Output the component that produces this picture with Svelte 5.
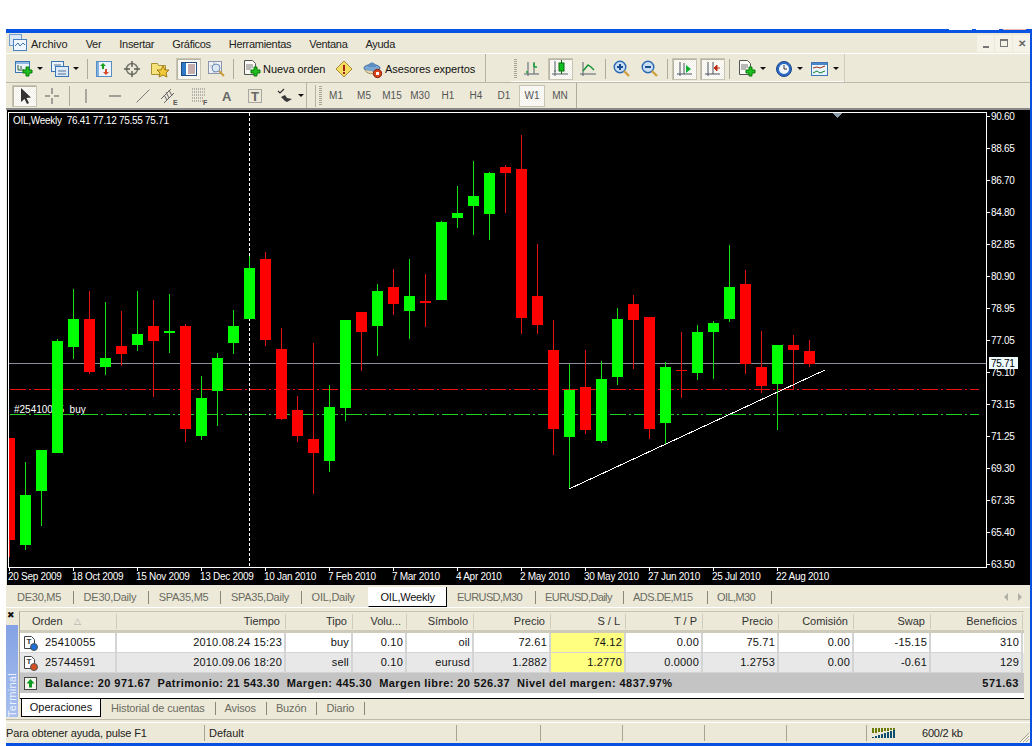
<script>
  const raw = [
    [9,'r',438,438,540,557],[25,'g',462,495,545,550],[41,'g',450,450,491,526],[57,'g',339,341,453,453],
    [73,'g',289,319,347,359],[89,'r',291,319,372,374],[105,'g',302,358,367,375],[121,'r',311,346,354,366],
    [137,'g',291,334,345,351],[153,'r',300,326,341,397],[169,'g',294,331,333,353],[185,'r',324,326,429,442],
    [201,'g',376,398,436,440],[217,'g',353,358,391,426],[233,'g',310,326,343,354],[249,'g',256,268,319,319],
    [265,'r',252,259,340,346],[281,'r',328,349,419,420],[297,'r',396,410,436,442],[313,'r',343,439,453,494],
    [329,'g',385,407,461,472],[345,'g',320,320,408,421],[361,'r',312,312,332,371],[377,'g',284,291,326,356],
    [393,'r',269,287,304,315],[409,'g',259,296,311,339],[425,'r',274,301,303,327],[441,'g',221,222,300,300],
    [457,'g',186,213,218,228],[473,'g',161,196,206,235],[489,'g',172,173,214,240],[505,'r',165,167,173,213],
    [521,'r',135,169,318,334],[537,'r',244,296,325,334],[553,'r',320,350,429,455],[569,'g',364,390,437,489],
    [585,'r',350,387,430,434],[601,'g',361,379,441,443],[617,'g',308,319,377,385],[633,'r',295,304,320,369],
    [649,'r',317,317,429,439],[665,'g',362,367,423,444],[681,'r',332,370,371,398],[697,'g',325,332,373,380],
    [713,'g',321,323,332,379],[729,'g',245,287,319,322],[745,'r',270,284,364,374],[761,'r',331,367,386,393],
    [777,'g',345,345,384,430],[793,'r',335,345,350,390],[809,'r',340,351,364,367]
  ];
  const candles = raw.map(([x,c,h,t,b,l]) => ({x,c,h,t,b,l}));
  const prices = ['90.60','88.65','86.70','84.80','82.85','80.90','78.95','77.05','75.10','73.15','71.25','69.30','67.35','65.40','63.50'];
  const dates = ['20 Sep 2009','18 Oct 2009','15 Nov 2009','13 Dec 2009','10 Jan 2010','7 Feb 2010','7 Mar 2010','4 Apr 2010','2 May 2010','30 May 2010','27 Jun 2010','25 Jul 2010','22 Aug 2010'];

  const tb1a = [
    {w:6},{w:33,i:'newchart',a:1},{w:3},{w:33,i:'profile',a:1},{w:3},{w:6,s:1},
    {w:28,i:'market'},{w:28,i:'cross'},{w:28,i:'folder'},{w:2},{w:25,i:'nav',p:1},{w:3},{w:26,i:'data'},{w:6,s:1}
  ];
  const tb1c = [
    {w:30,i:'bars'},{w:1},{w:25,i:'candles',p:1},{w:3},{w:26,i:'line'},{w:6,s:1},
    {w:28,i:'zin'},{w:28,i:'zout'},{w:6,s:1},{w:2},{w:25,i:'auto',p:1},{w:3},{w:25,i:'shift',p:1},{w:1},{w:6,s:1},
    {w:5},{w:29,i:'indic',a:1},{w:8},{w:29,i:'clock',a:1},{w:7},{w:29,i:'tmpl',a:1}
  ];
  const tb2a = [
    {w:6},{w:25,i:'pointer',p:1},{w:3},{w:23,i:'plus'},{w:12,s:1},{w:22,i:'vline'},{w:36,i:'hline'},{w:20,i:'diag'},
    {w:34,i:'chan'},{w:24,i:'fibo'},{w:31,i:'atext'},{w:26,i:'ttext'},{w:7},{w:29,i:'shapes',a:1}
  ];
  const tfs = ['M1','M5','M15','M30','H1','H4','D1'];

  const tabs = ['DE30,M5','DE30,Daily','SPA35,M5','SPA35,Daily','OIL,Daily'];
  const tabs2 = [['EURUSD,M30',88],['EURUSD,Daily',88],['ADS.DE,M15',84],['OIL,M30',64]];
  const heads = ['Tiempo','Tipo','Volu...','Símbolo','Precio','S / L','T / P','Precio','Comisión','Swap','Beneficios'];
  const rows = [
    {id:'25410055',c:'#1f6fd8',v:['2010.08.24 15:23','buy','0.10','oil','72.61','74.12','0.00','75.71','0.00','-15.15','310']},
    {id:'25744591',c:'#d84f1f',v:['2010.09.06 18:20','sell','0.10','eurusd','1.2882','1.2770','0.0000','1.2753','0.00','-0.61','129']}
  ];
  const bottom = ['Historial de cuentas','Avisos','Buzón','Diario'];
  const bars = [0,1,2,3,4,5,6,7];
</script>

{#snippet icon(n)}
  <svg class="ic" width="20" height="20" viewBox="0 0 20 20">
    {#if n==='newchart'}
      <rect x="1.5" y="2.5" width="14" height="11" fill="#eaf2fb" stroke="#3c74b4"/><rect x="2" y="3" width="13" height="2" fill="#8fb8e4"/><path d="M4 6v5h6M7 7v3" stroke="#2a5a2a" fill="none"/>
      <path d="M12 8h3v3h3v3h-3v3h-3v-3h-3v-3h3z" fill="#1fc01f" stroke="#0a7a0a"/>
    {:else if n==='profile'}
      <rect x="1.5" y="2.5" width="12" height="10" fill="#eaf2fb" stroke="#3c74b4"/><rect x="5.5" y="7.5" width="13" height="10" fill="#dce9f8" stroke="#3c74b4"/><path d="M8 12h8M8 15h8M4 6h7" stroke="#55708f"/>
    {:else if n==='market'}
      <rect x="2.5" y="2.5" width="15" height="15" fill="#eef4fb" stroke="#5a8cc4"/><rect x="3" y="3" width="2" height="14" fill="#7fb0e4"/><path d="M9 4l3 3h-2v3h-2v-3h-2z" fill="#1aa01a"/><path d="M12 16l-3-3h2v-3h2v3h2z" fill="#d84a2a"/>
    {:else if n==='cross'}
      <circle cx="10" cy="10" r="5.5" fill="none" stroke="#7a7a70" stroke-width="1.5"/><path d="M10 2v6M10 12v6M2 10h6M12 10h6" stroke="#5a5a55" stroke-width="1.4"/>
    {:else if n==='folder'}
      <path d="M1.5 4.5h6l1 2h7v9h-14z" fill="#f6e27a" stroke="#a89030"/><path d="M13 7l2 4h4l-3 3 1 4-4-2-4 2 1-4-3-3h4z" fill="#f2c83c" stroke="#a07c10"/>
    {:else if n==='nav'}
      <rect x="2.5" y="3.5" width="15" height="13" fill="#fff" stroke="#244a80"/><rect x="3" y="4" width="4" height="12" fill="#2e78c8"/><path d="M9 6h7M9 8h7M9 10h7M9 12h7M9 14h7" stroke="#8a5a5a"/>
    {:else if n==='data'}
      <rect x="1.5" y="2.5" width="13" height="12" fill="#eef0f6" stroke="#8a96b0"/><path d="M7 3v11M3 7h10" stroke="#aeb6c8"/><circle cx="9" cy="9" r="4" fill="#dce8f6" stroke="#6a88b0"/><path d="M12 12l5 5" stroke="#c89a3a" stroke-width="2"/>
    {:else if n==='order'||n==='indic'}
      <path d="M2.5 1.5h8l3 3v11h-11z" fill="#fbfbf6" stroke="#555"/><path d="M4 6h7M4 8h7M4 10h5" stroke="#777"/>
      <path d="M12 8h3v3h3v3h-3v3h-3v-3h-3v-3h3z" fill="#1fc01f" stroke="#0a7a0a"/>
    {:else if n==='diamond'}
      <path d="M10 2l8 8-8 8-8-8z" fill="#f8dc60" stroke="#a88a40"/><path d="M10 6v6" stroke="#a02010" stroke-width="2"/><rect x="9" y="13" width="2" height="2" fill="#a02010"/>
    {:else if n==='hat'}
      <ellipse cx="9" cy="9" rx="8" ry="3.5" fill="#7aa6d4" stroke="#3c6a9c"/><path d="M5 8c0-6 8-6 8 0z" fill="#5c8cc0"/><path d="M2 11c1 4 10 5 12 2" fill="#e8d8a8" stroke="#a89060"/><circle cx="14.5" cy="14.5" r="4.2" fill="#d8401c" stroke="#8a2810"/><rect x="13" y="13" width="3" height="3" fill="#fff"/>
    {:else if n==='bars'}
      <path d="M6 3v14M2 15h15M12 3v12" stroke="#55606a" fill="none"/><path d="M4 13h2M12 8h3M12 4v4" stroke="#10a030" fill="none" stroke-width="1.5"/>
    {:else if n==='candles'}
      <path d="M4 2v15M1 15h16M3 12h2" stroke="#55606a"/><rect x="8" y="4" width="5" height="8" fill="#10c020" stroke="#0a6a10"/><path d="M10.5 1v3M10.5 12v3" stroke="#0a6a10"/>
    {:else if n==='line'}
      <path d="M4 3v14M1 15h16" stroke="#55606a"/><path d="M4 12l5-6 3 2 3 3" fill="none" stroke="#109030" stroke-width="1.4"/>
    {:else if n==='zin'||n==='zout'}
      <circle cx="8" cy="8" r="5.8" fill="#c8def4" stroke="#2a68b4" stroke-width="1.4"/><path d="M5 8h6" stroke="#1c4c90" stroke-width="2"/>
      {#if n==='zin'}<path d="M8 5v6" stroke="#1c4c90" stroke-width="2"/>{/if}
      <path d="M12 12l5 5" stroke="#d0a040" stroke-width="2.4"/>
    {:else if n==='auto'}
      <path d="M5 3v14M2 15h15M9 4v11" stroke="#4a5560"/><path d="M11 6l5 4-5 4z" fill="#10b030"/>
    {:else if n==='shift'}
      <path d="M5 3v14M2 15h15M10 3v12" stroke="#4a5560"/><path d="M17 9h-4M11 9l3-3v6z" fill="#c02a10" stroke="#c02a10"/>
    {:else if n==='clock'}
      <circle cx="10" cy="10" r="7.5" fill="#2c6cc4" stroke="#1c4488"/><circle cx="10" cy="10" r="5" fill="#f4f6fa"/><path d="M10 6v4h3" stroke="#333" fill="none"/>
    {:else if n==='tmpl'}
      <rect x="1.5" y="3.5" width="16" height="13" fill="#e8f4ff" stroke="#3c74b4"/><rect x="2" y="4" width="15" height="2" fill="#4a86cc"/><path d="M3 9l4-1 3 1 5-2" fill="none" stroke="#a03010"/><path d="M3 14l4-2 3 2 5-2" fill="none" stroke="#108030"/>
    {:else if n==='pointer'}
      <path d="M6 2l0 14 3.5-3 2.5 5 2-1-2.5-5 4.5-.5z" fill="#333"/>
    {:else if n==='plus'}
      <path d="M10 2v6M10 12v6M3 10h5M12 10h5" stroke="#555"/>
    {:else if n==='vline'}
      <path d="M10 3v14" stroke="#666"/>
    {:else if n==='hline'}
      <path d="M4 10h12" stroke="#555"/>
    {:else if n==='diag'}
      <path d="M3.5 16.5l13-13" stroke="#777"/>
    {:else if n==='chan'}
      <path d="M1 13l10-10M4 17l10-10M6 6l3 6M9 4l3 6M4 9l3 5" stroke="#666" fill="none"/><text x="13" y="19" class="mini">E</text>
    {:else if n==='fibo'}
      <path d="M3 3h14M3 6h14M3 9h14M3 12h11M3 15h11" stroke="#777" stroke-dasharray="1 1"/><text x="14" y="19" class="mini">F</text>
    {:else if n==='atext'}
      <text x="5" y="15" class="aa">A</text>
    {:else if n==='ttext'}
      <rect x="3.5" y="3.5" width="13" height="13" fill="none" stroke="#666" stroke-dasharray="1 1"/><text x="6" y="15" class="aa">T</text>
    {:else if n==='shapes'}
      <path d="M3 5l2 2 4-4" fill="none" stroke="#333" stroke-width="1.2"/><path d="M6 11l4-2 2 3 5 1-5 3-2-1z" fill="#3a3a3a"/>
    {/if}
  </svg>
{/snippet}

{#snippet items(list)}
  {#each list as it}
    {#if it.s}
      <div class="slot" style:width="{it.w}px"><span class="sep"></span></div>
    {:else if it.i}
      <div class="slot" class:pressed={it.p} style:width="{it.w}px">
        {@render icon(it.i)}
        {#if it.a}<span class="arrow"></span>{/if}
      </div>
    {:else}
      <div class="pad" style:width="{it.w}px"></div>
    {/if}
  {/each}
{/snippet}

<div class="page">
  <div class="win">
    <div class="title">
      <i class="cap"></i><i class="cap"></i><i class="cap red"></i>
    </div>

    <div class="menu">
      <svg class="appicon" width="18" height="18" viewBox="0 0 18 18"><rect x="0.5" y="0.5" width="12" height="11" fill="#dbe8f8" stroke="#6f9bd2"/><rect x="4.5" y="5.5" width="13" height="11" fill="#f0f6fd" stroke="#4a80c0"/><path d="M6 12l3-3 2 3 3-3 2 2" fill="none" stroke="#3a70b0"/></svg>
      <span class="m first">Archivo</span><span class="m">Ver</span><span class="m">Insertar</span><span class="m">Gráficos</span><span class="m">Herramientas</span><span class="m">Ventana</span><span class="m">Ayuda</span>
      <div class="mdi">
        <span class="mb"><b class="min"></b></span><span class="mb"><b class="res"></b></span><span class="mb"><b class="x">✕</b></span>
      </div>
    </div>

    <div class="tb one">
      <div class="group first-group">
        {@render items(tb1a)}
        <div class="slot lab order">{@render icon('order')}<span>Nueva orden</span></div>
        <div class="slot" style:width="26px">{@render icon('diamond')}</div>
        <div class="slot lab hat">{@render icon('hat')}<span>Asesores expertos</span></div>
      </div>
      <div class="gapfill"></div>
      <div class="group last-group">
        <span class="grip"></span>
        {@render items(tb1c)}
      </div>
    </div>

    <div class="tb two">
      <div class="group tools">
        {@render items(tb2a)}
      </div>
      <div class="group frames">
        <span class="vbar"></span>
        <span class="grip"></span>
        {#each tfs as t}<div class="tf">{t}</div>{/each}
        <div class="tf w1">W1</div>
        <div class="tf mn">MN</div>
      </div>
    </div>

    <div class="chart">
      <svg width="1022" height="475" viewBox="7 110 1022 475" shape-rendering="crispEdges">
        <rect x="8" y="112" width="1" height="456" fill="#fff"/>
        <rect x="8" y="112" width="978" height="1" fill="#fff"/>
        <rect x="986" y="112" width="1" height="456" fill="#fff"/>
        <rect x="8" y="567" width="979" height="1" fill="#fff"/>

        <path d="M832 113h11l-5.5 5z" fill="#8b9ba8"/>

        <text x="13" y="124" class="t">OIL,Weekly  76.41 77.12 75.55 75.71</text>
        <text x="14" y="413" class="t lbl">#25410055  buy</text>

        <line x1="9" x2="986" y1="363.5" y2="363.5" stroke="#8a8e9a"/>
        <line x1="10" x2="979" y1="389.5" y2="389.5" stroke="#f01010" stroke-dasharray="16 3 2 3"/>
        <line x1="10" x2="979" y1="414.5" y2="414.5" stroke="#22d022" stroke-dasharray="16 3 2 3"/>
        <line x1="249.5" x2="249.5" y1="113" y2="567" stroke="#fff" stroke-dasharray="3 2"/>

        {#each candles as k}
          <rect x={k.x} y={k.h} width="1" height={k.l-k.h} fill={k.c==='g'?'#14e014':'#e01414'}/>
          <rect x={k.x===9?9:k.x-5} y={k.t} width={k.x===9?6:11} height={k.b-k.t} fill={k.c==='g'?'#00ff00':'#ff0000'}/>
        {/each}

        <line x1="569" y1="489" x2="825" y2="370" stroke="#fff"/>

        {#each prices as p,i}
          <rect x="987" y={116+i*32} width="3" height="1" fill="#fff"/>
          <text x="991" y={120+i*32} class="t">{p}</text>
        {/each}
        <rect x="989" y="357" width="29" height="12" fill="#eefcff"/>
        <text x="991" y="367" class="t dark">75.71</text>

        {#each dates as d,i}
          <rect x={9+i*64} y="568" width="1" height="3" fill="#fff"/>
          <text x={8+i*64} y="580" class="t">{d}</text>
        {/each}
      </svg>
    </div>

    <div class="tabs">
      {#each tabs as t}<span class="tab">{t}</span>{/each}
      <span class="tab active">OIL,Weekly</span>
      {#each tabs2 as [t,w]}<span class="tab tight" style:width="{w}px">{t}</span>{/each}
      <span class="scroll"><i class="tl"></i><i class="tr"></i></span>
    </div>

    <div class="terminal">
      <div class="side">
        <span class="close">✖</span>
        <div class="strip"><span>Terminal</span></div>
      </div>
      <div class="main">
        <div class="table">
          <div class="row head">
            <div class="c left"><span>Orden</span><span class="sort">△</span></div>
            {#each heads as h}<div class="c">{h}</div>{/each}
          </div>
          {#each rows as r,i}
            <div class="row body" class:alt={i===1}>
              <div class="c left id">
                <svg width="16" height="16" viewBox="0 0 16 16"><path d="M1.5 1.5h7l3 3v9h-10z" fill="#fff" stroke="#444"/><text x="3.5" y="9" class="mini t2">T</text><circle cx="11" cy="12" r="3.5" fill={r.c} stroke="#555"/></svg>
                <span>{r.id}</span>
              </div>
              {#each r.v as v,j}<div class="c" class:sl={j===5}>{v}</div>{/each}
            </div>
          {/each}
          <div class="row total">
            <svg width="13" height="13" viewBox="0 0 13 13"><rect x="0.5" y="0.5" width="12" height="12" fill="#f4f4ec" stroke="#444"/><path d="M6.5 2l4 4.5h-2.5v4h-3v-4h-2.5z" fill="#0a9a20"/></svg>
            <span class="bal">Balance: 20 971.67&nbsp; Patrimonio: 21 543.30&nbsp; Margen: 445.30&nbsp; Margen libre: 20 526.37&nbsp; Nivel del margen: 4837.97%</span>
            <span class="sum">571.63</span>
          </div>
          <div class="blank"></div>
        </div>
        <div class="subtabs">
          <span class="sub active">Operaciones</span>
          {#each bottom as b}<span class="sub">{b}</span>{/each}
        </div>
      </div>
    </div>

    <div class="status">
      <span class="st help">Para obtener ayuda, pulse F1</span>
      <span class="st def">Default</span>
      <span class="st e1"></span><span class="st e2"></span><span class="st e2"></span><span class="st e2"></span><span class="st e3"></span>
      <span class="st net">
        <svg width="24" height="12" viewBox="0 0 24 12" shape-rendering="crispEdges">
          {#each bars as b}
            <rect x={b*3} y="1" width="2" height={5-b*0.5} fill="#6b7a00"/>
            <rect x={b*3} y={10-b} width="2" height={b+1} fill="#0f4f70"/>
          {/each}
        </svg>
        <span class="kb">600/2 kb</span>
      </span>
      <svg class="resize" width="12" height="12" viewBox="0 0 12 12"><path d="M11 2L2 11M11 5L5 11M11 8L8 11" stroke="#a8a490"/><path d="M12 3L3 12M12 6L6 12M12 9L9 12" stroke="#fff"/></svg>
    </div>
    <div class="foot"></div>
  </div>
</div>

<style>
  :global(body) { margin: 0; background: #fff; }
  .page { width: 1032px; height: 746px; padding: 29px 2px 0 6px; box-sizing: border-box; font: 11px "Liberation Sans", Arial, sans-serif; color: #222; overflow: hidden; }
  .win { width: 1024px; height: 717px; background: #ece9d8; border-right: 2px solid #0a50e0; display: flex; flex-direction: column; }
  .title { height: 4px; background: #0a54e4; flex: none; display: flex; justify-content: flex-end; gap: 4px; padding-right: 4px; }
  .cap { width: 23px; height: 1px; background: #fff; }
  .cap.red { background: #e8b8a8; }
  .menu { height: 20px; flex: none; border-bottom: 1px solid #fff; display: flex; align-items: center; font-size: 11px; position: relative; }
  .appicon { margin-left: 3px; flex: none; }
  .m { margin-left: 18px; letter-spacing: -.3px; padding-top: 2px; }
  .m.first { margin-left: 4px; letter-spacing: 0; }
  .mdi { margin-left: auto; display: flex; gap: 1px; margin-right: 0; }
  .mb { width: 17px; height: 17px; background: #f5f3e8; display: flex; align-items: center; justify-content: center; color: #666; position: relative; }
  .min { width: 6px; height: 2px; background: #777; margin-top: 8px; }
  .res { width: 8px; height: 8px; border: 1px solid #777; border-top-width: 2px; box-sizing: border-box; }
  .x { font-size: 10px; color: #666; }
  .tb { flex: none; display: flex; position: relative; }
  .one { height: 28px; }
  .one .group { padding-top: 1px; box-sizing: border-box; }
  .two { border-top: 1px solid #bdb9a8; border-bottom: 2px solid #888; height: 25px; }
  .group { display: flex; align-items: center; height: 100%; }
  .first-group { width: 480px; border-right: 1px solid #b8b4a2; }
  .gapfill { width: 25px; }
  .last-group { width: 334px; border-right: 1px solid #cfcbb8; box-shadow: inset 0 -1px 0 #fff; }
  .grip { width: 3px; height: 20px; margin-left: 3px; flex: none; background: repeating-linear-gradient(#a8a490 0 1px, #ece9d8 1px 2px); }
  .slot { display: flex; align-items: center; justify-content: center; height: 22px; flex: none; gap: 3px; box-sizing: border-box; }
  .pad { flex: none; }
  .ic { flex: none; }
  .sep { display: block; width: 1px; height: 20px; background: #b0ac9a; }
  .pressed { background: repeating-conic-gradient(#fff 0 25%, #f2f0e6 0 50%) 0 0/2px 2px; border: 1px solid #c8c4b2; box-shadow: inset 1px 1px 0 #b8b4a4; }
  .arrow { width: 0; height: 0; border: 3px solid transparent; border-top: 3px solid #111; border-bottom: 0; flex: none; }
  .lab { justify-content: flex-start; color: #111; font-size: 11px; }
  .lab span { letter-spacing: -.05px; }
  .order { width: 95px; padding-left: 6px; gap: 1px; }
  .hat { width: 128px; padding-left: 6px; gap: 2px; }
  .tools { width: 300px; border-right: 1px solid #b8b4a2; }
  .frames { width: 270px; color: #555; font-size: 10px; border-right: 1px solid #b0ac9a; padding-top: 1px; box-sizing: border-box; }
  .vbar { width: 1px; height: 22px; margin-left: 8px; background: #b8b4a2; flex: none; }
  .frames .grip { margin-left: 3px; margin-right: 0; }
  .tf { flex: none; width: 28px; text-align: center; line-height: 22px; height: 22px; }
  .w1 { width: 26px; margin-left: 1px; background: repeating-conic-gradient(#fff 0 25%, #f2f0e6 0 50%) 0 0/2px 2px; border: 1px solid #c8c4b2; box-sizing: border-box; line-height: 20px; }
  .mn { width: 30px; }
  .chart { height: 475px; flex: none; background: #000; margin-left: 1px; overflow: hidden; line-height: 0; }
  .t { font: 10px "Liberation Sans", Arial, sans-serif; fill: #fff; letter-spacing: -.28px; white-space: pre; shape-rendering: auto; }
  .lbl { letter-spacing: 0; }
  .dark { fill: #000; }
  .mini { font: bold 7px "Liberation Sans", Arial, sans-serif; fill: #555; }
  .t2 { font-size: 8px; fill: #333; }
  .aa { font: bold 13px "Liberation Sans", Arial, sans-serif; fill: #666; }
  .tabs { height: 20px; flex: none; margin-top: 2px; border-bottom: 1px solid #fff; display: flex; align-items: center; color: #6b6b60; font-size: 11px; position: relative; padding-left: 1px; letter-spacing: -.25px; }
  .tab { padding: 0 11.5px 0 10px; border-right: 1px solid #8a8778; height: 13px; line-height: 13px; flex: none; }
  .tab:nth-child(5) { border-right-color: transparent; }
  .tab.active { background: #fff; color: #111; width: 79px; text-align: center; height: 20px; line-height: 20px; border: 1px solid #000; border-top: 0; border-left: 1px solid #fff; padding: 0; box-sizing: border-box; margin-left: 1px; margin-right: 1px; margin-top: -1px; }
  .tab.tight { box-sizing: border-box; padding: 0 0 0 9px; letter-spacing: -.6px; white-space: nowrap; overflow: hidden; }
  .scroll { margin-left: auto; margin-right: 8px; display: flex; gap: 10px; }
  .tl, .tr { width: 0; height: 0; border: 4px solid transparent; display: block; }
  .tl { border-right-color: #b0b0a4; border-left: 0; }
  .tr { border-left-color: #b0b0a4; border-right: 0; }
  .terminal { height: 112px; flex: none; display: flex; border-bottom: 1px solid #bdb9a8; box-sizing: border-box; }
  .side { width: 13px; flex: none; display: flex; flex-direction: column; }
  .close { height: 17px; font-size: 9px; line-height: 15px; color: #111; padding-left: 1px; box-sizing: border-box; }
  .strip { width: 12px; height: 92px; background: linear-gradient(#84a2e4, #a8bfee); color: #eef3fd; display: flex; align-items: flex-end; justify-content: center; }
  .strip span { writing-mode: vertical-rl; transform: rotate(180deg); font-size: 11px; line-height: 12px; padding-bottom: 2px; letter-spacing: .3px; }
  .main { flex: 1; min-width: 0; padding-top: 3px; }
  .table { width: 1005px; border-left: 1px solid #aca899; border-top: 1px solid #c8c4b4; box-sizing: border-box; background: #ece9d8; }
  .row { display: grid; grid-template-columns: 97px 169px 67px 54px 67px 77px 75px 77px 76px 75px 77px 92px; }
  .head { border-bottom: 3px solid #cfcbbb; color: #333; height: 18px; }
  .head .c { border-right: 1px solid #cfccbb; height: 15px; line-height: 15px; margin-top: 2px; padding-right: 5px; }
  .head .left { display: flex; gap: 11px; padding-left: 12px; }
  .sort { color: #aaa; font-size: 9px; }
  .c { text-align: right; box-sizing: border-box; white-space: nowrap; }
  .body { height: 20px; background: #fff; line-height: 19px; color: #111; }
  .body .c { border-right: 2px solid #d4d4d4; border-bottom: 1px solid #d4d4d4; letter-spacing: .2px; padding-right: 2px; }
  .body.alt { background: #e8e8e8; }
  .sl { background: #ffff80; }
  .body .id { display: flex; align-items: center; gap: 6px; padding-left: 3px; text-align: left; }
  .total { display: flex; align-items: center; height: 20px; background: #c4c4c4; font-weight: bold; color: #111; padding: 0 5px 0 4px; }
  .bal { margin-left: 8px; letter-spacing: .43px; }
  .sum { margin-left: auto; letter-spacing: .5px; }
  .blank { height: 5px; background: #fff; border-bottom: 1px solid #000; }
  .subtabs { height: 19px; display: flex; align-items: center; color: #6b6b60; }
  .sub { padding: 0 10px 0 9px; border-right: 1px solid #8a8778; height: 13px; line-height: 13px; letter-spacing: -.15px; flex: none; }
  .sub.active { background: #fff; color: #111; height: 18px; line-height: 17px; border: 1px solid #000; border-top: 0; box-sizing: border-box; margin-top: -1px; margin-left: 2px; margin-right: 1px; width: 80px; text-align: center; padding: 0; letter-spacing: 0; }
  .status { height: 21px; flex: none; display: flex; align-items: center; border-top: 1px solid #fff; margin-top: 2px; position: relative; box-sizing: border-box; }
  .st { height: 16px; line-height: 16px; border-right: 1px solid #a8a490; box-sizing: border-box; flex: none; }
  .help { width: 199px; letter-spacing: -.15px; }
  .def { width: 252px; padding-left: 4px; }
  .e1 { width: 84px; }
  .e2 { width: 82px; }
  .e3 { width: 80px; }
  .net { border: 0; display: flex; align-items: center; padding-left: 5px; }
  .kb { margin-left: 26px; letter-spacing: -.2px; }
  .resize { position: absolute; right: 0; bottom: 0; }
  .foot { height: 4px; background: #0a50e0; flex: none; }
</style>
